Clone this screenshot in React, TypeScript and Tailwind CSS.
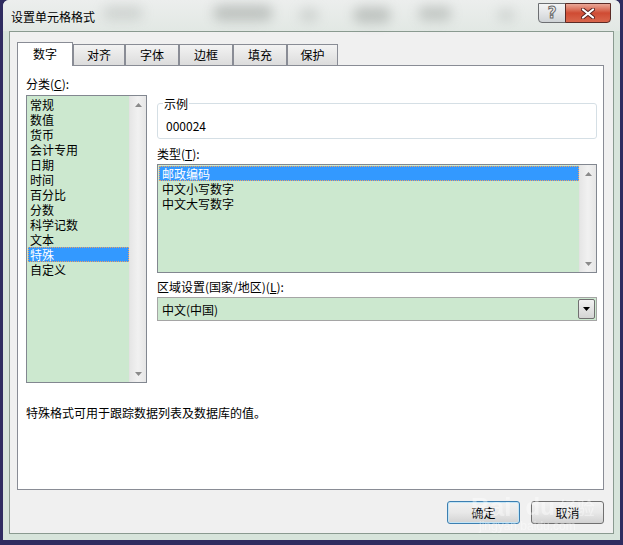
import React from 'react';

// Format Cells dialog (数字 tab, 特殊 category)

const CATEGORIES = ['常规', '数值', '货币', '会计专用', '日期', '时间', '百分比', '分数', '科学记数', '文本', '特殊', '自定义'];
const TYPES = ['邮政编码', '中文小写数字', '中文大写数字'];

const TABS = [
  { label: '数字', w: 'w-[56px]' },
  { label: '对齐', w: 'w-[52px]' },
  { label: '字体', w: 'w-[54px]' },
  { label: '边框', w: 'w-[54px]' },
  { label: '填充', w: 'w-[54px]' },
  { label: '保护', w: 'w-[51px]' },
];

const Arrow = ({ down = false, color = '#8a8a8a' }: { down?: boolean; color?: string }) => (
  <svg width="7" height="4" viewBox="0 0 7 4">
    <path d={down ? 'M0 0 H7 L3.5 4 Z' : 'M0 4 H7 L3.5 0 Z'} fill={color} />
  </svg>
);

const ScrollBar = () => (
  <div className="w-[17px] flex flex-col justify-between bg-linear-to-r from-[#e6e6e6] via-[#f1f1f1] to-[#e6e6e6] border-l border-[#e2e2e2]">
    <div className="h-[17px] flex items-center justify-center">
      <Arrow />
    </div>
    <div className="h-[17px] flex items-center justify-center">
      <Arrow down />
    </div>
  </div>
);

interface ListBoxProps {
  items: string[];
  selected: string;
  className?: string;
  textPad?: string;
}

const ListBox = ({ items, selected, className = '', textPad = 'pl-[2px]' }: ListBoxProps) => (
  <div className={`flex border border-[#828790] bg-[#cce8cf] ${className}`}>
    <div className="flex-1 flex flex-col pt-px pl-px">
      {items.map(item => (
        <div
          key={item}
          className={
            item === selected
              ? `h-[15px] leading-[15px] ${textPad} bg-[#3399ff] text-white outline-1 outline-dotted outline-[#f0a060] -outline-offset-1`
              : `h-[15px] leading-[15px] ${textPad}`
          }
        >
          {item}
        </div>
      ))}
    </div>
    <ScrollBar />
  </div>
);

export default function App() {
  return (
    <div className="w-[623px] h-[545px] bg-[#2f2c60] px-[3px] font-['Noto_Sans_CJK_SC',sans-serif] text-[12px] text-black">
      <div className="relative w-[617px] h-[540px] rounded-t-[6px] bg-[#d7e4db] flex flex-col px-[6px] pb-[6px] overflow-hidden">
        {/* Title bar (glass) */}
        <div className="relative h-[31px] flex items-start -mx-[6px] px-[6px] bg-linear-to-b from-[#eceeed] to-[#e2e8e4]">
          <span className="absolute left-[100px] top-[6px] w-[40px] h-[14px] rounded-full bg-[#a3a9a6] opacity-35 blur-[6px]" />
          <span className="absolute left-[210px] top-[5px] w-[60px] h-[16px] rounded-full bg-[#8d938f] opacity-45 blur-[6px]" />
          <span className="absolute left-[296px] top-[8px] w-[20px] h-[14px] rounded-full bg-[#a3a9a6] opacity-35 blur-[6px]" />
          <span className="absolute left-[350px] top-[7px] w-[38px] h-[16px] rounded-full bg-[#8d938f] opacity-45 blur-[6px]" />
          <span className="absolute left-[415px] top-[6px] w-[34px] h-[15px] rounded-full bg-[#8d938f] opacity-40 blur-[6px]" />
          <span className="absolute left-[494px] top-[9px] w-[18px] h-[12px] rounded-full bg-[#a3a9a6] opacity-35 blur-[6px]" />
          <span className="relative ml-[2px] mt-[9px] leading-[16px]">设置单元格格式</span>
          <div className="relative ml-auto mr-[3px] mt-[3px] flex">
            <div className="w-[28px] h-[20px] flex items-center justify-center rounded-bl-[4px] border border-[#6d6f72] bg-linear-to-b from-[#f4f5f6] via-[#e3e5e7] to-[#cfd3d6]">
              <span className="text-[15px] leading-[15px] font-['DejaVu_Sans',sans-serif] font-bold text-[#f6f6f6] [-webkit-text-stroke:1px_#6a6a6a]">?</span>
            </div>
            <div className="w-[46px] h-[20px] -ml-px flex items-center justify-center rounded-br-[4px] border border-[#5b2a25] bg-linear-to-b from-[#e9a898] via-[#cf4b33] to-[#d9664c]">
              <svg width="14" height="11" viewBox="0 0 14 11">
                <path d="M2 1.5 L12 9.5 M12 1.5 L2 9.5" stroke="#5a2420" strokeWidth="4" strokeLinecap="round" />
                <path d="M2 1.5 L12 9.5 M12 1.5 L2 9.5" stroke="#ffffff" strokeWidth="2.2" strokeLinecap="round" />
              </svg>
            </div>
          </div>
        </div>

        {/* Client area */}
        <div className="flex-1 flex flex-col border border-[#8a9a90] bg-[#f0f0f0]">
          {/* Tabs */}
          <div className="h-[33px] pt-[10px] pl-[7px] flex items-end">
            {TABS.map((tab, i) =>
              i === 0 ? (
                <div
                  key={tab.label}
                  className={`${tab.w} relative z-10 h-[24px] -mb-px flex items-center justify-center pb-[1px] bg-white border-l border-t border-r border-[#898c95]`}
                >
                  {tab.label}
                </div>
              ) : (
                <div
                  key={tab.label}
                  className={`${tab.w} h-[21px] flex items-center justify-center bg-linear-to-b from-[#f3f3f3] to-[#dcdcdc] border-l border-t border-r border-[#898c95]`}
                >
                  {tab.label}
                </div>
              )
            )}
          </div>

          {/* Tab panel */}
          <div className="ml-[7px] w-[587px] h-[425px] flex flex-col bg-white border border-[#898c95] pl-[8px]">
            <div className="flex items-start gap-[10px]">
              {/* 分类 */}
              <div className="w-[121px] flex flex-col pt-[10px]">
                <div className="leading-[15px]">
                  分类(<span className="underline">C</span>):
                </div>
                <ListBox items={CATEGORIES} selected="特殊" className="mt-[4px] h-[288px]" />
              </div>

              {/* right side */}
              <div className="w-[440px] flex flex-col">
                <div className="relative mt-[37px] h-[36px] rounded-[3px] border border-[#d5dfe5] pl-[8px] pt-[14px]">
                  <span className="absolute left-[5px] -top-[8px] px-px bg-white leading-[15px]">示例</span>
                  <div className="leading-[15px]">000024</div>
                </div>

                <div className="mt-[7px] leading-[15px]">
                  类型(<span className="underline">T</span>):
                </div>
                <ListBox items={TYPES} selected="邮政编码" className="mt-[3px] h-[109px]" textPad="pl-[3px]" />

                <div className="mt-[6px] leading-[15px]">
                  区域设置(国家/地区)(<span className="underline">L</span>):
                </div>
                <div className="mt-[3px] h-[24px] flex items-center border border-[#a5a5a5] bg-[#cce8cf] pl-[4px] pr-px">
                  <span className="flex-1 leading-[15px]">中文(中国)</span>
                  <div className="w-[17px] h-[20px] flex items-center justify-center rounded-[2px] border border-[#707070] bg-linear-to-b from-[#f3f3f3] to-[#d4d4d4]">
                    <Arrow down color="#000000" />
                  </div>
                </div>
              </div>
            </div>

            <div className="mt-[22px] leading-[15px]">特殊格式可用于跟踪数据列表及数据库的值。</div>
          </div>

          {/* Buttons */}
          <div className="mt-[11px] pr-[9px] flex justify-end gap-[11px]">
            <button className="w-[73px] h-[23px] rounded-[3px] border border-[#3c7fb1] shadow-[inset_0_0_0_1px_#c4e5f6] bg-linear-to-b from-[#f2f2f2] via-[#e8e8e8] to-[#d2d2d2] leading-[15px]">
              确定
            </button>
            <button className="w-[73px] h-[23px] rounded-[3px] border border-[#707070] bg-linear-to-b from-[#f2f2f2] via-[#e8e8e8] to-[#d2d2d2] leading-[15px]">
              取消
            </button>
          </div>
        </div>

        {/* watermark */}
        <div className="absolute left-[468px] top-[494px] flex flex-col items-start text-white opacity-40 pointer-events-none">
          <div className="flex items-end leading-[26px]">
            <span className="text-[26px] font-['Liberation_Sans',sans-serif] font-bold">Bai</span>
            <span className="text-[24px] font-['Liberation_Sans',sans-serif] font-bold ml-[14px]">du</span>
            <span className="text-[18px] ml-[4px]">经验</span>
          </div>
          <span className="ml-[8px] text-[12px] leading-[12px] font-['Liberation_Sans',sans-serif]">jingyan.baidu.com</span>
        </div>
      </div>
    </div>
  );
}
